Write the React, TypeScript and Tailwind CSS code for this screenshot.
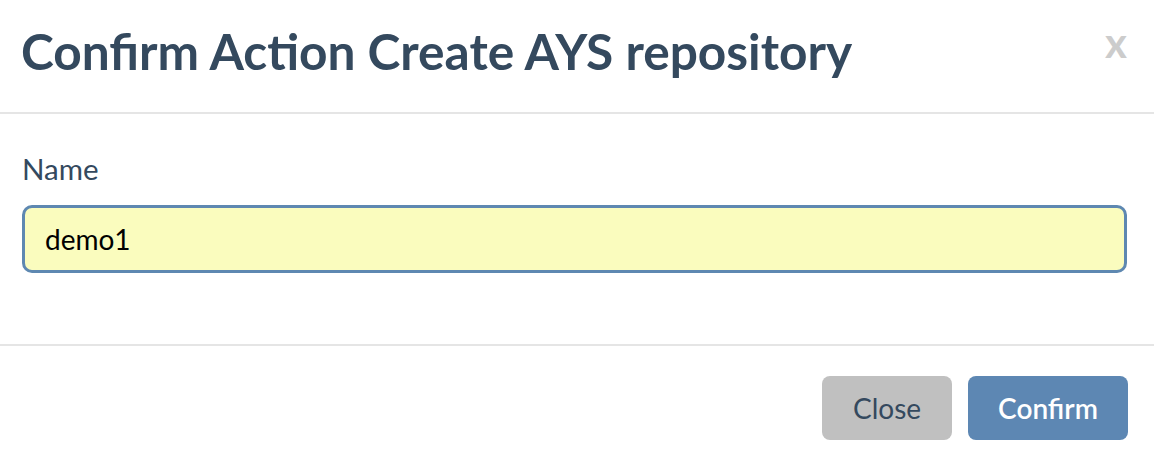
import React from "react";

export default function App() {
  return (
    <div
      className="w-[1154px] h-[462px] bg-white flex flex-col overflow-hidden"
      style={{ fontFamily: "Lato, 'Noto Sans', sans-serif" }}
    >
      <div className="flex items-start justify-between pl-[21px] pr-[27px] pt-[20px] pb-[30px] border-b-2 border-[#e5e5e5]">
        <h4 className="text-[49.6px] leading-[62px] font-bold text-[#34495e]">
          Confirm Action Create AYS repository
        </h4>
        <button className="text-[42px] leading-[42px] font-bold text-[#cccccc] mt-[1px]">x</button>
      </div>
      <div className="pl-[22px] pr-[27px] pt-[38px] pb-[71px] border-b-2 border-[#e5e5e5]">
        <label className="block text-[29.5px] leading-[34px] text-[#34495e]">Name</label>
        <div className="mt-[19px] h-[68px] border-[3px] border-[#5e88b1] rounded-[10px] bg-[#fafcbe] flex items-center pl-[20px] text-[28px] text-black">
          demo1
        </div>
      </div>
      <div className="flex justify-end gap-[16px] pt-[30px] pr-[26px]">
        <button className="w-[130px] h-[64px] rounded-[8px] bg-[#c0c0c0] text-[#34495e] text-[28px]">
          Close
        </button>
        <button className="w-[160px] h-[64px] rounded-[8px] bg-[#5d87b3] text-white text-[28px] font-semibold">
          Confirm
        </button>
      </div>
    </div>
  );
}
